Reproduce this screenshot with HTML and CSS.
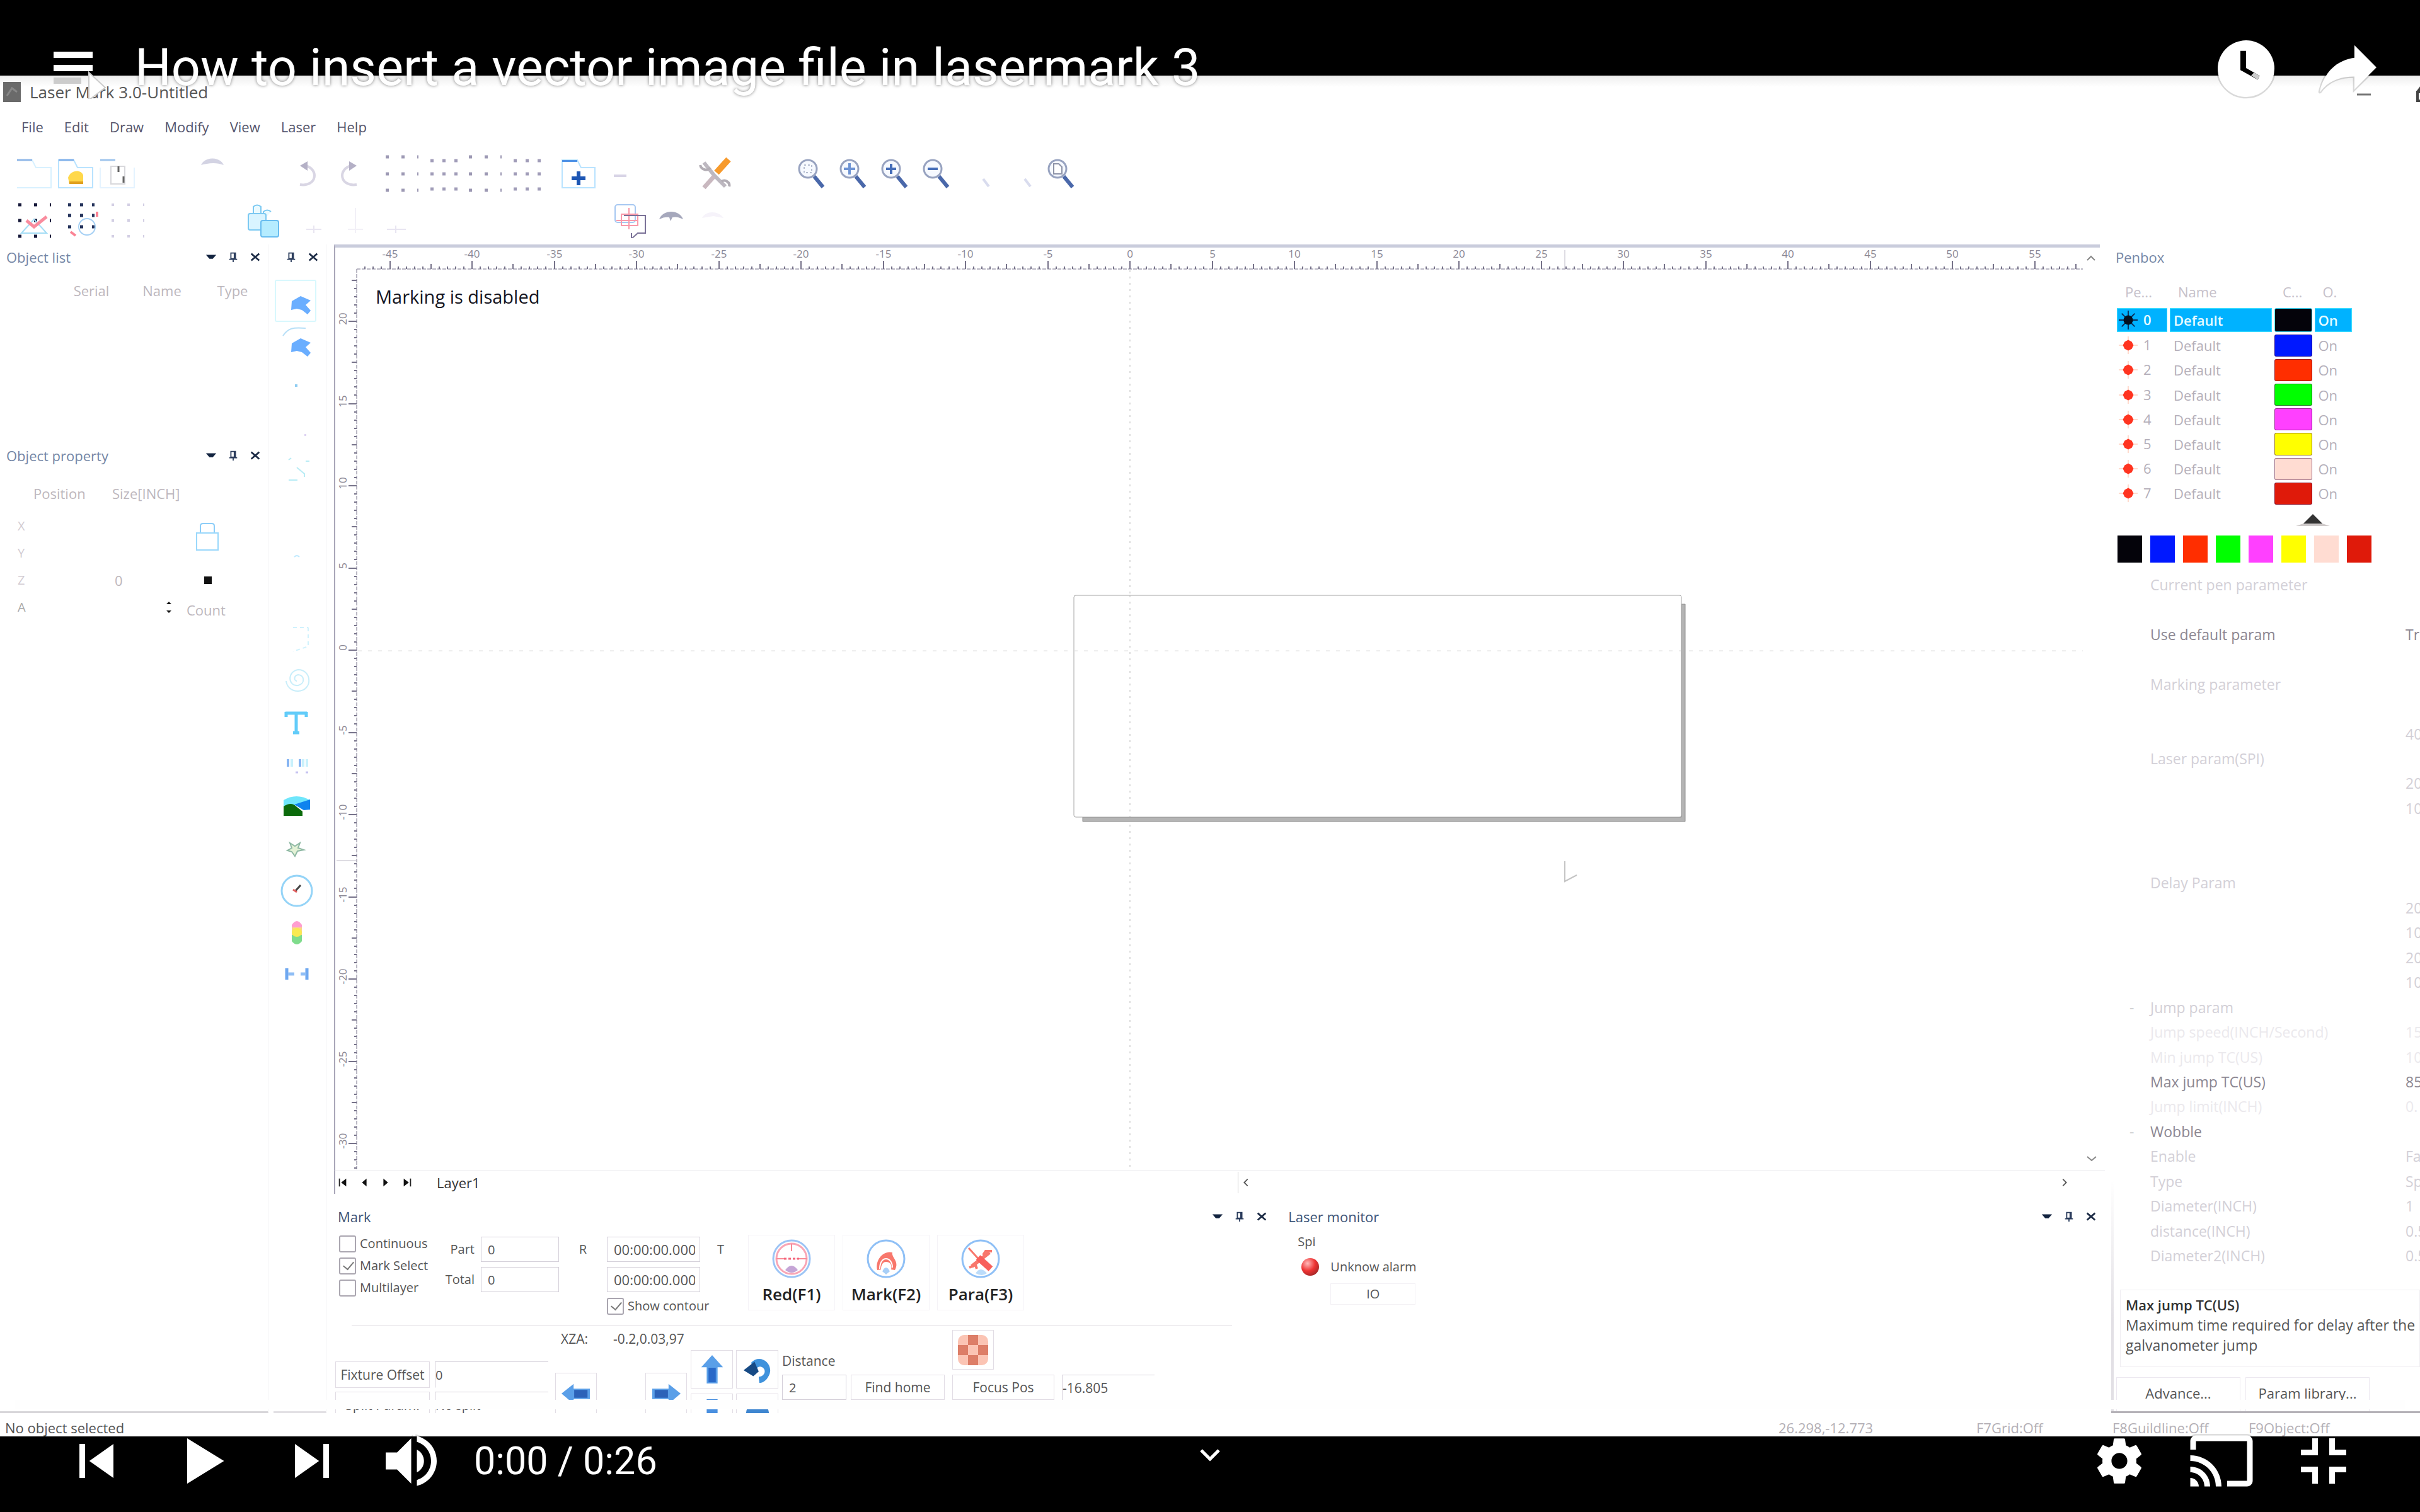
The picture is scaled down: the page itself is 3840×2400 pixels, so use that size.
FILE: index.html
```html
<!DOCTYPE html>
<html lang="en">
<head>
    <meta charset="UTF-8">
    <meta name="viewport" content="width=device-width, initial-scale=1.0">
    <title>How to insert a vector image file in lasermark 3</title>
    <link rel="stylesheet" href="styles.css">
</head>
<body>

    <!-- shared icons -->
    <svg class="sprite" aria-hidden="true">
        <symbol id="i-down" viewBox="0 0 20 20"><path d="M1 6h18l-6 7H7z" fill="#12233f"/></symbol>
        <symbol id="i-pin" viewBox="0 0 20 20"><path d="M6 3h8v10H6zM3 14h14M10 14v5M12 3v10" fill="none" stroke="#2b3c5c" stroke-width="2"/></symbol>
        <symbol id="i-close" viewBox="0 0 20 20"><path d="M3 4l14 12M17 4L3 16" fill="none" stroke="#1d2c46" stroke-width="3"/></symbol>
        <symbol id="i-zoom" viewBox="0 0 56 56"><circle cx="24" cy="20" r="14" fill="#f6f9ff" stroke="#98a3c0" stroke-width="3"/><path d="M34 32l14 17" stroke="#4a68aa" stroke-width="6"/></symbol>
        <symbol id="i-dots" viewBox="0 0 56 60"><path d="M3 3h52M3 30h52M3 56h52" stroke="#9d99b4" stroke-width="5" stroke-dasharray="5 20"/></symbol>
        <symbol id="i-dots-s" viewBox="0 0 56 60"><path d="M8 9h45M8 30h45M8 54h45" stroke="#a09cb8" stroke-width="5" stroke-dasharray="5 14"/></symbol>
        <symbol id="i-arrow" viewBox="0 0 60 60"><path d="M16 38l1-14 14-8 16 7-8 7 8 9-5 6-9-7-8-2z" fill="#6aaeff"/></symbol>
        <symbol id="i-burst" viewBox="0 0 32 32"><path d="M0 16h32M16 1v30" stroke="#ffb49a" stroke-width="1"/><path d="M16 7l6 3 3 6-3 6-6 3-6-3-3-6 3-6z" fill="#ff3420"/></symbol>
    </svg>

    <div class="player">
        <main class="app">
            <header class="titlebar">
                <svg class="app-icon" viewBox="0 0 28 32"><rect width="28" height="32" fill="#6a6a6a"/><path d="M6 22l8-12 8 6" fill="none" stroke="#888" stroke-width="3"/></svg>
                <span class="app-name">Laser Mark 3.0-Untitled</span>
                <svg class="window-buttons" viewBox="0 0 102 36"><path d="M2 22h22" stroke="#777" stroke-width="3"/><path d="M98 34V18l6-8M96 18h8M98 32h8" fill="none" stroke="#444" stroke-width="4"/></svg>
            </header>

            <nav class="menubar">
                <a href="#">File</a>
                <a href="#">Edit</a>
                <a href="#">Draw</a>
                <a href="#">Modify</a>
                <a href="#">View</a>
                <a href="#">Laser</a>
                <a href="#">Help</a>
            </nav>

            <div class="toolbar">
                <div class="tools">
                    <button aria-label="New"><svg viewBox="0 0 56 56"><path d="M1 6h24l6 12h24v32H1" fill="none" stroke="#d8f1ff" stroke-width="2"/><path d="M1 6h24" stroke="#8fb7e8" stroke-width="3"/></svg></button>
                    <button aria-label="Open"><svg viewBox="0 0 56 56"><path d="M1 6h24l6 12h24v32H1z" fill="none" stroke="#b9e3ff" stroke-width="2"/><path d="M1 6h24" stroke="#7fb0ea" stroke-width="3"/><path d="M16 34c4-12 20-14 24-4v14H18z" fill="#ffd84a"/><path d="M18 40h22v4H18z" fill="#e0a020"/></svg></button>
                    <button aria-label="Save"><svg viewBox="0 0 56 56"><path d="M1 50V18M55 18v32H1" fill="none" stroke="#e4f3ff" stroke-width="2"/><path d="M1 6h24" stroke="#9fc4ec" stroke-width="3"/><path d="M18 16h22v28H18z" fill="none" stroke="#d8d8dc" stroke-width="2"/><path d="M30 16v9M38 32v10" stroke="#666" stroke-width="3"/></svg></button>
                </div>
                <div class="tools wide">
                    <button aria-label="Cut"><svg viewBox="0 0 56 56"><path d="M10 14c6-14 30-14 36 0-12-5-26-3-36 0z" fill="#d3d3e3"/></svg></button>
                </div>
                <div class="tools wide">
                    <button aria-label="Undo"><svg viewBox="0 0 56 56"><path d="M16 45c28 4 30-26 8-30" fill="none" stroke="#d9d6e4" stroke-width="4"/><path d="M28 8L16 15l12 8z" fill="#b4b0c6"/></svg></button>
                    <button aria-label="Redo"><svg viewBox="0 0 56 56"><path d="M40 45c-28 4-30-26-8-30" fill="none" stroke="#d9d6e4" stroke-width="4"/><path d="M28 8l12 7-12 8z" fill="#b4b0c6"/></svg></button>
                </div>
                <div class="tools near">
                    <button aria-label="Align left"><svg><use href="#i-dots"/></svg></button>
                    <button aria-label="Align center"><svg><use href="#i-dots-s"/></svg></button>
                    <button aria-label="Align right"><svg><use href="#i-dots"/></svg></button>
                    <button aria-label="Distribute"><svg><use href="#i-dots-s"/></svg></button>
                </div>
                <div class="tools near">
                    <button aria-label="Add layer"><svg viewBox="0 0 56 56"><path d="M2 6h24l6 12h22v32H2z" fill="none" stroke="#b9e3ff" stroke-width="2"/><path d="M2 6h24v3H2z" fill="#4f92e6"/><path d="M28 24v22M17 35h22" stroke="#1d56b4" stroke-width="6"/></svg></button>
                    <button aria-label="Remove layer"><svg viewBox="0 0 56 56"><path d="M18 31h20" stroke="#d8d4e6" stroke-width="4"/></svg></button>
                </div>
                <div class="tools wide">
                    <button aria-label="Settings"><svg viewBox="0 0 56 56"><path d="M10 10l16 20 18 18" stroke="#bdb8c0" stroke-width="6" fill="none"/><path d="M26 32L10 50" stroke="#c9b8bf" stroke-width="7"/><path d="M30 26L49 5" stroke="#f79a2c" stroke-width="10"/><path d="M4 14c2 8 12 10 16 4M38 40c6-4 14 2 12 8" fill="none" stroke="#b2adb4" stroke-width="4"/></svg></button>
                </div>
                <div class="tools wide">
                    <button aria-label="Zoom window"><svg viewBox="0 0 56 56"><use href="#i-zoom"/><path d="M18 14h12v12H18z" fill="none" stroke="#b6bed2" stroke-dasharray="3 3" stroke-width="2"/></svg></button>
                    <button aria-label="Zoom all"><svg viewBox="0 0 56 56"><use href="#i-zoom"/><path d="M24 11v18M15 20h18" stroke="#6d93d4" stroke-width="4"/></svg></button>
                    <button aria-label="Zoom in"><svg viewBox="0 0 56 56"><use href="#i-zoom"/><path d="M24 12v16M16 20h16" stroke="#456db8" stroke-width="4"/></svg></button>
                    <button aria-label="Zoom out"><svg viewBox="0 0 56 56"><use href="#i-zoom"/><path d="M16 20h16" stroke="#456db8" stroke-width="4"/></svg></button>
                    <button aria-label="Zoom previous"><svg viewBox="0 0 56 56"><path d="M38 36l9 12" stroke="#d9dcee" stroke-width="4"/></svg></button>
                    <button aria-label="Zoom next"><svg viewBox="0 0 56 56"><path d="M38 36l9 12" stroke="#d9dcee" stroke-width="4"/></svg></button>
                    <button aria-label="Zoom page"><svg viewBox="0 0 56 56"><use href="#i-zoom"/><path d="M18 12h8l5 5v11H18z" fill="#fff" stroke="#8d93a8" stroke-width="2"/></svg></button>
                </div>
            </div>

            <div class="toolbar second">
                <div class="tools loose">
                    <button aria-label="Edit nodes"><svg viewBox="0 0 56 56"><path d="M3 3h52M3 28h52M3 53h52" stroke="#16193a" stroke-width="5" stroke-dasharray="5 20"/><path d="M8 48l20-22 20 22z" fill="none" stroke="#a5ddf5" stroke-width="2"/><path d="M16 28l12 10 20-16" fill="none" stroke="#f98c9e" stroke-width="5"/></svg></button>
                    <button aria-label="Pick nodes"><svg viewBox="0 0 56 56"><path d="M8 3h42M8 20h42M8 38h42" stroke="#26345c" stroke-width="5" stroke-dasharray="5 14"/><circle cx="38" cy="38" r="13" fill="none" stroke="#a5d0f4" stroke-width="2"/><path d="M12 46l8 6M54 14v8" stroke="#fb8394" stroke-width="4"/></svg></button>
                    <button aria-label="Snap"><svg viewBox="0 0 56 56"><path d="M3 3h52M3 28h52M3 53h52" stroke="#d3cfe4" stroke-width="4" stroke-dasharray="4 21"/></svg></button>
                </div>
                <div class="tools lock-gap">
                    <button aria-label="Lock"><svg viewBox="0 0 56 56"><path d="M12 18V6q6-5 12 0v12M28 28V14q6-5 12 0" fill="#eafaff" stroke="#7cc9f2" stroke-width="2"/><rect x="4" y="17" width="28" height="26" rx="3" fill="#d9f4ff" stroke="#7cc9f2" stroke-width="2"/><rect x="24" y="28" width="28" height="26" rx="3" fill="#b5ecff" stroke="#69bdf0" stroke-width="2"/></svg></button>
                    <button aria-label="Move up"><svg viewBox="0 0 56 56"><path d="M30 42h24M42 36v12" stroke="#e8e5f1" stroke-width="2"/></svg></button>
                    <button aria-label="Move down"><svg viewBox="0 0 56 56"><path d="M30 42h24M42 8v40" stroke="#f2f0f7" stroke-width="2"/></svg></button>
                    <button aria-label="Center"><svg viewBox="0 0 56 56"><path d="M26 42h30M40 36v12" stroke="#e8e5f1" stroke-width="2"/></svg></button>
                </div>
                <div class="tools far">
                    <button aria-label="Hatch"><svg viewBox="0 0 56 56"><rect x="4" y="3" width="32" height="28" rx="4" fill="none" stroke="#a6c8f2" stroke-width="2"/><path d="M6 28h34M26 8v34M14 18h26v18H14z" fill="none" stroke="#f99aaa" stroke-width="2"/><path d="M18 20h34v28H40l-10 9v-9" fill="none" stroke="#7b7298" stroke-width="2"/></svg></button>
                    <button aria-label="Group"><svg viewBox="0 0 56 56"><path d="M8 26c6-16 32-16 38 0-8-4-13-4-17-3l-3 6-2-6c-5-1-10 0-16 3z" fill="#a6a8bc"/></svg></button>
                    <button aria-label="Ungroup"><svg viewBox="0 0 56 56"><path d="M10 24c6-12 26-12 34 0l-16-3z" fill="#f6f3fa"/></svg></button>
                </div>
            </div>

            <div class="workspace">
                <aside class="left-dock">
                    <section class="object-list">
                        <div class="panel-head">
                            <h2>Object list</h2>
                            <button aria-label="Menu"><svg><use href="#i-down"/></svg></button>
                            <button aria-label="Pin"><svg><use href="#i-pin"/></svg></button>
                            <button aria-label="Close"><svg><use href="#i-close"/></svg></button>
                        </div>
                        <table class="objects">
                            <thead><tr><th>Serial</th><th>Name</th><th>Type</th></tr></thead>
                        </table>
                    </section>
                    <section class="object-property">
                        <div class="panel-head">
                            <h2>Object property</h2>
                            <button aria-label="Menu"><svg><use href="#i-down"/></svg></button>
                            <button aria-label="Pin"><svg><use href="#i-pin"/></svg></button>
                            <button aria-label="Close"><svg><use href="#i-close"/></svg></button>
                        </div>
                        <form class="property-form">
                            <span class="col-position">Position</span>
                            <span class="col-size">Size[INCH]</span>
                            <label class="axis" for="x">X</label><input id="x" type="text"><input type="text" aria-label="Width">
                            <label class="axis" for="y">Y</label><input id="y" type="text"><input type="text" aria-label="Height">
                            <label class="axis" for="z">Z</label><input id="z" type="text"><input type="text" aria-label="Depth" value="0">
                            <label class="axis strong" for="a">A</label><input id="a" type="text"><input type="text" aria-label="Angle">
                            <svg class="spin" viewBox="0 0 8 20"><path d="M0 5l4-4 4 4zM0 15h8l-4 4z" fill="#111"/></svg>
                            <button class="size-lock" type="button" aria-label="Keep ratio"><svg viewBox="0 0 36 46"><path d="M7 17V6q0-4 4-4h14q4 0 4 4v11" fill="none" stroke="#8ccdf8" stroke-width="2"/><rect x="1" y="17" width="34" height="27" fill="none" stroke="#9ad8fb" stroke-width="2"/></svg></button>
                            <input class="anchor" type="checkbox" checked aria-label="Anchor">
                            <button class="count" type="button">Count</button>
                        </form>
                    </section>
                </aside>

                <aside class="palette">
                    <div class="panel-head">
                        <button aria-label="Pin"><svg><use href="#i-pin"/></svg></button>
                        <button aria-label="Close"><svg><use href="#i-close"/></svg></button>
                    </div>
                    <button class="tool active" aria-label="Select"><svg viewBox="0 0 60 60"><use href="#i-arrow" x="5" y="6"/></svg></button>
                    <button class="tool" aria-label="Node edit"><svg viewBox="0 0 60 60"><path d="M8 18c8-12 16-14 36-12" fill="none" stroke="#b6dff7" stroke-width="2"/><use href="#i-arrow" x="5" y="6"/></svg></button>
                    <button class="tool" aria-label="Point"><svg viewBox="0 0 60 60"><rect x="27" y="28" width="4" height="4" fill="#8fcdf2"/></svg></button>
                    <button class="tool" aria-label="Line"><svg viewBox="0 0 60 60"><rect x="42" y="40" width="3" height="3" fill="#ddd2f2"/></svg></button>
                    <button class="tool" aria-label="Polyline"><svg viewBox="0 0 60 60"><path d="M17 14l4-3M44 16h6M30 26l12 10v5M17 46h14" fill="none" stroke="#b8ecf5" stroke-width="2"/></svg></button>
                    <button class="tool" aria-label="Curve"></button>
                    <button class="tool" aria-label="Rectangle"><svg viewBox="0 0 60 60"><path d="M26 34q4-4 8 0" fill="none" stroke="#c0eaff" stroke-width="2"/></svg></button>
                    <button class="tool" aria-label="Circle"></button>
                    <button class="tool" aria-label="Polygon"><svg viewBox="0 0 60 60"><path d="M24 12h24M48 12v30l-24 8" fill="none" stroke="#d0f2fd" stroke-width="2" stroke-dasharray="6 5"/></svg></button>
                    <button class="tool" aria-label="Spiral"><svg viewBox="0 0 60 60"><path d="M30 30c-4 0-6-8 2-10 10 0 12 14 0 17-16 2-18-22 0-25 22 0 24 33 0 34-12 0-18-8-19-16" fill="none" stroke="#c9eefa" stroke-width="2"/></svg></button>
                    <button class="tool" aria-label="Text"><svg viewBox="0 0 60 60"><path d="M12 14h34M29 14v32M24 45h10M13 12v8M45 12v8" fill="none" stroke="#62ccf9" stroke-width="5"/></svg></button>
                    <button class="tool" aria-label="Barcode"><svg viewBox="0 0 60 60"><path d="M16 20v12M35 20v12" stroke="#86b4f2" stroke-width="4"/><path d="M22 20v12M40 20v12M46 20v12" stroke="#c9f1fc" stroke-width="4"/><path d="M28 41h4M44 41h4" stroke="#c7c4f2" stroke-width="3"/></svg></button>
                    <button class="tool" aria-label="Image"><svg viewBox="0 0 60 60"><path d="M9 18q20-12 42 0v6L9 28z" fill="#6fe6fb"/><path d="M26 25l25-8v16l-10 1z" fill="#0f83ee"/><path d="M9 28q12-8 20 0l10 8v7H9z" fill="#0b6a0b"/></svg></button>
                    <button class="tool" aria-label="Vector file"><svg viewBox="0 0 60 60"><path d="M19 19l8 5 8-5-3 8 9 3-10 2-4 8-5-7-7-2 7-4z" fill="#e4f2d6" stroke="#8fb9a4" stroke-width="2"/></svg></button>
                    <button class="tool" aria-label="Timer"><svg viewBox="0 0 60 60"><circle cx="30" cy="28" r="24" fill="#fff" stroke="#95d4f7" stroke-width="3"/><path d="M27 29l9-10" stroke="#444" stroke-width="3"/><path d="M24 26l6 4" stroke="#e06060" stroke-width="3"/></svg></button>
                    <button class="tool" aria-label="Layers"><svg viewBox="0 0 60 60"><path d="M22 21v-6q8-12 16 0v6z" fill="#ff9ed0"/><path d="M22 19h16v16H22z" fill="#fbd58c"/><path d="M22 31v10q8 10 16 0V31z" fill="#7fdc8c"/><ellipse cx="30" cy="27" rx="8" ry="7" fill="#f9ea50"/></svg></button>
                    <button class="tool" aria-label="Dimension"><svg viewBox="0 0 60 60"><path d="M14 17v18M46 17v18" stroke="#6fa8f0" stroke-width="5"/><path d="M16 26h10M36 26h9" stroke="#8fbef5" stroke-width="5"/></svg></button>
                </aside>

                <div class="center">
                    <div class="canvas">
                        <svg id="drawing" class="drawing">
                            <g id="rulers"></g>
                            <path d="M34 34H2773M34 34V1463" class="ruler-line"/>
                            <path d="M1951 4V34M2 973H34" class="tracker"/>
                            <path d="M1261 36V1463" class="axis-v"/>
                            <path d="M36 640H2773" class="axis-h"/>
                            <path d="M1186 904H2136V566H2142V911H1186z" class="work-shadow"/>
                            <rect x="1172" y="552" width="964" height="352" rx="3" class="work-area"/>
                            <path d="M1261 552V904" class="axis-v"/>
                            <path d="M1172 640H2136" class="axis-h"/>
                            <path d="M1951 974V1006L1970 996" class="pointer"/>
                            <text x="64" y="89" class="notice">Marking is disabled</text>
                            <path d="M2780 20l6-6 6 6M2780 1443l7 6 7-6" class="scroll-mark"/>
                        </svg>
                    </div>
                    <div class="sheets">
                        <button aria-label="First"><svg viewBox="0 0 20 20"><path d="M4 3v14" stroke="#222" stroke-width="2"/><path d="M16 3v14l-9-7z" fill="#111"/></svg></button>
                        <button aria-label="Previous"><svg viewBox="0 0 20 20"><path d="M14 3v14l-8-7z" fill="#111"/></svg></button>
                        <button aria-label="Next"><svg viewBox="0 0 20 20"><path d="M6 3v14l8-7z" fill="#111"/></svg></button>
                        <button aria-label="Last"><svg viewBox="0 0 20 20"><path d="M16 3v14" stroke="#222" stroke-width="2"/><path d="M4 3v14l9-7z" fill="#111"/></svg></button>
                        <button class="sheet">Layer1</button>
                        <div class="hscroll">
                            <svg viewBox="0 0 20 20"><path d="M13 4l-6 6 6 6" fill="none" stroke="#555" stroke-width="2"/></svg>
                            <svg viewBox="0 0 20 20"><path d="M7 4l6 6-6 6" fill="none" stroke="#555" stroke-width="2"/></svg>
                        </div>
                    </div>

                    <div class="bottom-dock">
                        <section class="mark">
                            <div class="panel-head dark">
                                <h2>Mark</h2>
                                <button aria-label="Menu"><svg><use href="#i-down"/></svg></button>
                                <button aria-label="Pin"><svg><use href="#i-pin"/></svg></button>
                                <button aria-label="Close"><svg><use href="#i-close"/></svg></button>
                            </div>
                            <div class="mark-top">
                                <div class="options">
                                    <label><input type="checkbox">Continuous</label>
                                    <label><input type="checkbox" checked>Mark Select</label>
                                    <label><input type="checkbox">Multilayer</label>
                                </div>
                                <div class="counters">
                                    <label for="part">Part</label>
                                    <input id="part" type="text" value="0">
                                    <label class="mid" for="rtime">R</label>
                                    <input id="rtime" type="text" value="00:00:00.000">
                                    <span class="mid">T</span>
                                    <label for="total">Total</label>
                                    <input id="total" type="text" value="0">
                                    <span></span>
                                    <input type="text" value="00:00:00.000" aria-label="Total time">
                                    <label class="contour"><input type="checkbox" checked>Show contour</label>
                                </div>
                                <div class="actions">
                                    <button><svg viewBox="0 0 64 64"><circle cx="32" cy="32" r="29" fill="#fff" stroke="#9cc4f5" stroke-width="3"/><circle cx="32" cy="32" r="24" fill="none" stroke="#f9a5b5" stroke-width="3"/><path d="M8 32h16M40 32h16M32 8v12" stroke="#f88a96" stroke-width="2"/><path d="M20 32h24" stroke="#f4647a" stroke-width="3" stroke-dasharray="4 3"/><path d="M22 50q10-14 20 0-10 8-20 0z" fill="#c5a5d6"/></svg>Red(F1)</button>
                                    <button><svg viewBox="0 0 64 64"><circle cx="32" cy="32" r="29" fill="#fff" stroke="#8fc0f6" stroke-width="3"/><path d="M18 50c-4-16 10-32 24-28-2 8 12 14 4 28l-6-1c2-8-2-12-8-12s-8 6-8 12z" fill="#f8776c"/><path d="M22 48c0-22 20-20 20-2" fill="none" stroke="#fff" stroke-width="2"/><path d="M26 52q6-12 12 0l-6 5z" fill="#a8cff7"/></svg>Mark(F2)</button>
                                    <button><svg viewBox="0 0 64 64"><circle cx="32" cy="32" r="29" fill="#fff" stroke="#8fc0f6" stroke-width="3"/><path d="M13 15l19 21" stroke="#f8776c" stroke-width="3"/><path d="M46 22L18 44" stroke="#f8776c" stroke-width="6"/><path d="M28 30l20 18" stroke="#f8605c" stroke-width="10"/><path d="M36 26l4-6h10M14 46l10-4 2 6" fill="none" stroke="#f8776c" stroke-width="4"/><path d="M24 55q8-12 18 0-8 6-18 0z" fill="#bcdcfa"/></svg>Para(F3)</button>
                                </div>
                            </div>
                            <div class="mark-bottom">
                                <div class="fixture">
                                    <button>Fixture Offset</button>
                                    <input type="text" value="0" aria-label="Fixture offset">
                                    <button>Split Param.</button>
                                    <input type="text" value="No split" aria-label="Split">
                                </div>
                                <div class="pad">
                                    <p><span>XZA:</span><span>-0.2,0.03,97</span></p>
                                    <button aria-label="X-"><svg viewBox="0 0 50 50"><path d="M1 25l20-16v8h27v17H21v8z" fill="#5a9fe8"/><path d="M22 19h22v13H22z" fill="#2c62b8"/></svg></button>
                                    <button aria-label="X+"><svg viewBox="0 0 50 50"><path d="M49 25L29 9v8H2v17h27v8z" fill="#5a9fe8"/><path d="M6 19h22v13H6z" fill="#2c62b8"/></svg></button>
                                </div>
                                <div class="jog">
                                    <button aria-label="Z+"><svg viewBox="0 0 50 50"><path d="M25 1l18 20h-9v27H16V21H7z" fill="#5a9fe8"/><path d="M19 22h12v24H19z" fill="#2868c8"/></svg></button>
                                    <button aria-label="A+"><svg viewBox="0 0 50 50"><path d="M14 14C30-4 56 18 42 38c-3 5-8 9-14 9l-1-10c10-1 12-10 8-14-4-5-10-3-12 1z" fill="#3f92dc"/><path d="M2 26l18-14 7 16-9 8z" fill="#174a85"/></svg></button>
                                    <button aria-label="Z-"><svg viewBox="0 0 50 50"><path d="M16 2h18v24h10L25 48 6 26h10z" fill="#4a90e0"/></svg></button>
                                    <button aria-label="A-"><svg viewBox="0 0 50 50"><path d="M6 34C2-4 48-4 44 34H32q-6-16-14 0z" fill="#3f86d0"/></svg></button>
                                </div>
                                <div class="distance">
                                    <label for="distance">Distance</label>
                                    <input id="distance" type="text" value="2">
                                </div>
                                <button class="home">Find home</button>
                                <div class="focus">
                                    <button class="grid-button" aria-label="Grid"><svg viewBox="0 0 48 48"><rect width="48" height="48" rx="10" fill="#fbc4b4"/><path d="M16 0h16v16H16zM0 16h16v16H0zM32 16h16v16H32zM16 32h16v16H16z" fill="#dd7e68"/></svg></button>
                                    <button>Focus Pos</button>
                                </div>
                                <input class="focus-value" type="text" value="-16.805" aria-label="Focus position">
                            </div>
                        </section>

                        <section class="monitor">
                            <div class="panel-head dark">
                                <h2>Laser monitor</h2>
                                <button aria-label="Menu"><svg><use href="#i-down"/></svg></button>
                                <button aria-label="Pin"><svg><use href="#i-pin"/></svg></button>
                                <button aria-label="Close"><svg><use href="#i-close"/></svg></button>
                            </div>
                            <p class="spi">Spi</p>
                            <p class="alarm"><span class="lamp"></span>Unknow alarm</p>
                            <button class="io">IO</button>
                        </section>
                    </div>
                </div>

                <aside class="right-dock">
                    <div class="panel-head"><h2>Penbox</h2></div>
                    <table class="pens">
                        <thead><tr><th>Pe...</th><th>Name</th><th>C...</th><th>O.</th></tr></thead>
                        <tbody>
                            <tr class="selected"><td><svg viewBox="0 0 32 32"><path d="M0 16h32M16 0v32M5 5l22 22M27 5L5 27" stroke="#0a2a55" stroke-width="2"/><circle cx="16" cy="16" r="8" fill="#03101f"/></svg>0</td><td>Default</td><td class="black"></td><td>On</td></tr>
                            <tr><td><svg><use href="#i-burst"/></svg>1</td><td>Default</td><td class="blue"></td><td>On</td></tr>
                            <tr><td><svg><use href="#i-burst"/></svg>2</td><td>Default</td><td class="red"></td><td>On</td></tr>
                            <tr><td><svg><use href="#i-burst"/></svg>3</td><td>Default</td><td class="green"></td><td>On</td></tr>
                            <tr><td><svg><use href="#i-burst"/></svg>4</td><td>Default</td><td class="magenta"></td><td>On</td></tr>
                            <tr><td><svg><use href="#i-burst"/></svg>5</td><td>Default</td><td class="yellow"></td><td>On</td></tr>
                            <tr><td><svg><use href="#i-burst"/></svg>6</td><td>Default</td><td class="pink"></td><td>On</td></tr>
                            <tr><td><svg><use href="#i-burst"/></svg>7</td><td>Default</td><td class="darkred"></td><td>On</td></tr>
                        </tbody>
                    </table>
                    <svg class="expander" viewBox="0 0 54 20"><path d="M0 19l12-4h30l12 4z" fill="#cfcaca"/><path d="M27 0l15 15H12z" fill="#333"/></svg>
                    <div class="swatches">
                        <button class="black" aria-label="Pen 0"></button>
                        <button class="blue" aria-label="Pen 1"></button>
                        <button class="red" aria-label="Pen 2"></button>
                        <button class="green" aria-label="Pen 3"></button>
                        <button class="magenta" aria-label="Pen 4"></button>
                        <button class="yellow" aria-label="Pen 5"></button>
                        <button class="pink" aria-label="Pen 6"></button>
                        <button class="darkred" aria-label="Pen 7"></button>
                    </div>
                    <dl class="params">
                        <div class="pale"><dt>Current pen parameter</dt></div>
                        <div></div>
                        <div class="clear"><dt>Use default param</dt><dd>True</dd></div>
                        <div></div>
                        <div class="pale"><dt>Marking parameter</dt></div>
                        <div></div>
                        <div class="pale"><dt></dt><dd>40</dd></div>
                        <div class="pale"><dt>Laser param(SPI)</dt></div>
                        <div class="pale"><dt></dt><dd>20</dd></div>
                        <div class="pale"><dt></dt><dd>10</dd></div>
                        <div></div>
                        <div></div>
                        <div class="pale"><dt>Delay Param</dt></div>
                        <div class="pale"><dt></dt><dd>20</dd></div>
                        <div class="pale"><dt></dt><dd>10</dd></div>
                        <div class="pale"><dt></dt><dd>20</dd></div>
                        <div class="pale"><dt></dt><dd>10</dd></div>
                        <div class="pale group"><dt>Jump param</dt></div>
                        <div class="faint"><dt>Jump speed(INCH/Second)</dt><dd>150</dd></div>
                        <div class="faint"><dt>Min jump TC(US)</dt><dd>10</dd></div>
                        <div class="clear"><dt>Max jump TC(US)</dt><dd>85</dd></div>
                        <div class="faint"><dt>Jump limit(INCH)</dt><dd>0.</dd></div>
                        <div class="clear group"><dt>Wobble</dt></div>
                        <div class="pale"><dt>Enable</dt><dd>False</dd></div>
                        <div class="pale"><dt>Type</dt><dd>Spiral</dd></div>
                        <div class="pale"><dt>Diameter(INCH)</dt><dd>1</dd></div>
                        <div class="pale"><dt>distance(INCH)</dt><dd>0.5</dd></div>
                        <div class="pale"><dt>Diameter2(INCH)</dt><dd>0.5</dd></div>
                    </dl>
                    <div class="hint">
                        <h3>Max jump TC(US)</h3>
                        <p>Maximum time required for delay after the<br>galvanometer jump</p>
                    </div>
                    <div class="pen-buttons">
                        <button>Advance...</button>
                        <button>Param library...</button>
                    </div>
                </aside>
            </div>

            <footer class="statusbar">
                <span>No object selected</span>
                <span>26.298,-12.773</span>
                <span>F7Grid:Off</span>
                <span>F8Guildline:Off</span>
                <span>F9Object:Off</span>
            </footer>
        </main>

        <header class="player-top">
            <button class="playlist" aria-label="Playlist"><svg viewBox="0 0 88 80"><path d="M5 5h62v10H5zM5 26h62v10H5z" fill="#fff"/><path d="M5 46h44v10H5z" fill="#ccc"/><path d="M61 38v44l26-20z" fill="#fff" stroke="#ccc" stroke-width="2"/></svg></button>
            <h1><a href="#">How to insert a vector image file in lasermark 3</a></h1>
            <button aria-label="Watch later"><svg viewBox="0 0 36 36"><circle cx="18" cy="18" r="10" class="glyph"/><path d="M16 11.7h2v6.1l4.8 2.7-.7 1.4-6.1-3.4z" fill="#000"/><path d="M19.8 20.4l1-1 2 1.1-.7 1.4z" fill="#ccc"/></svg></button>
            <button aria-label="Share"><svg viewBox="0 0 36 36"><path class="glyph" d="m 20.20,14.19 0,-4.45 7.79,7.79 -7.79,7.79 0,-4.56 C 16.27,20.69 12.10,21.81 9.34,24.76 8.80,25.13 7.60,27.29 8.12,25.65 9.08,21.32 11.80,17.18 15.98,15.38 c 1.33,-0.60 2.76,-0.98 4.21,-1.19 z"/></svg></button>
        </header>

        <input class="progress" type="range" min="0" max="26" value="0" aria-label="Seek">

        <div class="player-controls">
            <button aria-label="Previous"><svg viewBox="0 0 36 36"><path class="glyph" d="m 12,12 h 2 v 12 h -2 z m 3.5,6 8.5,6 V 12 z"/></svg></button>
            <button class="play" aria-label="Play"><svg viewBox="0 0 36 36"><path class="glyph" d="M12,26 25,18 12,10z"/></svg></button>
            <button aria-label="Next"><svg viewBox="0 0 36 36"><path class="glyph" d="M 12,24 20.5,18 12,12 V 24 z M 22,12 v 12 h 2 V 12 h -2 z"/></svg></button>
            <button aria-label="Mute"><svg viewBox="0 0 36 36"><path class="glyph" d="M8,21 L12,21 L17,26 L17,10 L12,15 L8,15 L8,21 Z M19,14 L19,22 C20.48,21.32 21.5,19.77 21.5,18 C21.5,16.26 20.48,14.74 19,14 Z M19,11.29 C21.89,12.15 24,14.83 24,18 C24,21.17 21.89,23.85 19,24.71 L19,26.77 C23.01,25.86 26,22.28 26,18 C26,13.72 23.01,10.14 19,9.23 Z"/></svg></button>
            <span class="time">0:00 / 0:26</span>
            <button aria-label="Settings"><svg viewBox="0 0 36 36"><path class="glyph" fill-rule="evenodd" d="m 23.94,18.78 c .03,-0.25 .05,-0.51 .05,-0.78 0,-0.27 -0.02,-0.52 -0.05,-0.78 l 1.68,-1.32 c .15,-0.12 .19,-0.33 .09,-0.51 l -1.6,-2.76 c -0.09,-0.17 -0.31,-0.24 -0.48,-0.17 l -1.99,.8 c -0.41,-0.32 -0.86,-0.58 -1.35,-0.78 l -0.30,-2.12 c -0.02,-0.19 -0.19,-0.33 -0.39,-0.33 l -3.2,0 c -0.2,0 -0.36,.14 -0.39,.33 l -0.30,2.12 c -0.48,.2 -0.93,.47 -1.35,.78 l -1.99,-0.8 c -0.18,-0.07 -0.39,0 -0.48,.17 l -1.6,2.76 c -0.10,.17 -0.05,.39 .09,.51 l 1.68,1.32 c -0.03,.25 -0.05,.52 -0.05,.78 0,.26 .02,.52 .05,.78 l -1.68,1.32 c -0.15,.12 -0.19,.33 -0.09,.51 l 1.6,2.76 c .09,.17 .31,.24 .48,.17 l 1.99,-0.8 c .41,.32 .86,.58 1.35,.78 l .30,2.12 c .02,.19 .19,.33 .39,.33 l 3.2,0 c .2,0 .36,-0.14 .39,-0.33 l .30,-2.12 c .48,-0.2 .93,-0.47 1.35,-0.78 l 1.99,.8 c .18,.07 .39,0 .48,-0.17 l 1.6,-2.76 c .09,-0.17 .05,-0.39 -0.09,-0.51 l -1.68,-1.32 0,0 z m -5.94,2.01 c -1.54,0 -2.8,-1.25 -2.8,-2.8 0,-1.54 1.25,-2.8 2.8,-2.8 1.54,0 2.8,1.25 2.8,2.8 0,1.54 -1.25,2.8 -2.8,2.8 l 0,0 z"/></svg></button>
            <button aria-label="Cast"><svg viewBox="0 0 36 36"><path class="glyph" d="M27,9 L9,9 C7.9,9 7,9.9 7,11 L7,14 L9,14 L9,11 L27,11 L27,25 L20,25 L20,27 L27,27 C28.1,27 29,26.1 29,25 L29,11 C29,9.9 28.1,9 27,9 Z M7,24 L7,27 L10,27 C10,25.34 8.66,24 7,24 Z M7,20 L7,22 C9.76,22 12,24.24 12,27 L14,27 C14,23.13 10.87,20 7,20 Z M7,16 L7,18 C11.97,18 16,22.03 16,27 L18,27 C18,20.92 13.07,16 7,16 Z"/></svg></button>
            <button aria-label="Exit full screen"><svg viewBox="0 0 36 36"><path class="glyph" d="m 14,14 -4,0 0,2 6,0 0,-6 -2,0 z M 22,14 l 0,-4 -2,0 0,6 6,0 0,-2 z M 20,26 l 2,0 0,-4 4,0 0,-2 -6,0 z M 10,22 l 4,0 0,4 2,0 0,-6 -6,0 z"/></svg></button>
        </div>

        <button class="more" aria-label="More videos"><svg viewBox="0 0 36 24"><path d="M4 4l14 14L32 4" fill="none" stroke="#fff" stroke-width="5"/></svg></button>
    </div>

    <script src="rulers.js"></script>
</body>
</html>
```
FILE: rulers.js
```js
// Draws the two rulers of the drawing area: a tick each half unit,
// a label each five units.
const STEP = 130.5;
const ORIGIN_X = 1261;
const ORIGIN_Y = 639;
const EDGE = 34;

const rulers = document.getElementById("rulers");

function add(tag, attrs, text) {
    const node = document.createElementNS("http://www.w3.org/2000/svg", tag);
    for (const key in attrs) {
        node.setAttribute(key, attrs[key]);
    }
    if (text !== undefined) {
        node.textContent = text;
    }
    rulers.appendChild(node);
}

function tickLength(i) {
    if (i % 10 === 0) return 13;
    return i % 5 === 0 ? 8 : 4;
}

let d = "";
for (let i = -93; i <= 115; i++) {
    const x = Math.round(ORIGIN_X + i * STEP / 10);
    d += "M" + x + " " + EDGE + "v-" + tickLength(i);
    if (i % 10 === 0) {
        add("text", { x: x, y: 16, class: "ruler-label" }, i / 2);
    }
}

for (let i = -45; i <= 63; i++) {
    const y = Math.round(ORIGIN_Y + i * STEP / 10);
    d += "M" + EDGE + " " + y + "h-" + tickLength(i);
    if (i % 10 === 0) {
        add("text", { class: "ruler-label", transform: "translate(18 " + (y - 4) + ") rotate(-90)" }, i === 0 ? 0 : -i / 2);
    }
}

add("path", { d: d, class: "ruler-tick" });
```
FILE: styles.css
```css
* {
    box-sizing: border-box;
}

body {
    margin: 0;
    background: #000;
    color: #555;
    font-family: "Open Sans", "Noto Sans", sans-serif;
    font-size: 20px;
    line-height: 28px;
}

h1, h2, h3, p, dl, dd {
    margin: 0;
    font-weight: normal;
}

button, input {
    font: inherit;
    color: inherit;
    background: none;
    border: none;
    padding: 0;
    margin: 0;
    min-width: 0;
}

button {
    cursor: pointer;
}

a {
    color: inherit;
    text-decoration: none;
}

svg {
    display: block;
}

.sprite {
    position: absolute;
    width: 0;
    height: 0;
}

/* player */
.player {
    position: relative;
    height: 100vh;
    padding: 120px 0;
    overflow: hidden;
}

.player-top {
    position: absolute;
    top: 0;
    left: 0;
    right: 0;
    display: flex;
    padding: 28px 33px 0 80px;
    color: #fff;
}

.player-top h1 {
    flex: 1;
    padding-left: 46px;
    font-family: Roboto, sans-serif;
    font-size: 81px;
    line-height: 160px;
    text-shadow: 0 0 5px rgba(0, 0, 0, 0.5);
    white-space: nowrap;
}

.player-top svg,
.player-controls svg {
    width: 162px;
    height: 162px;
}

.player-top .playlist svg {
    width: 88px;
    height: 80px;
    margin-top: 16px;
}

.glyph {
    fill: #fff;
    stroke: rgba(0, 0, 0, 0.15);
    stroke-width: 1px;
    paint-order: stroke;
}

.progress {
    position: absolute;
    left: 24px;
    right: 24px;
    bottom: 163px;
    height: 15px;
    width: calc(100% - 48px);
    appearance: none;
    background: #fefefe;
}

.progress::-webkit-slider-thumb {
    appearance: none;
    width: 1px;
}

.player-controls {
    position: absolute;
    left: 0;
    right: 0;
    bottom: 0;
    display: flex;
    align-items: center;
    padding: 0 72px;
    color: #fff;
}

.player-controls .play {
    margin: 0 9px;
}

.time {
    flex: 1;
    padding-left: 14px;
    font-family: Roboto, sans-serif;
    font-size: 61px;
}

.more {
    position: absolute;
    left: 50%;
    bottom: 78px;
    margin-left: -18px;
}

.more svg {
    width: 36px;
    height: 24px;
}

/* laser mark window */
.app {
    display: flex;
    flex-direction: column;
    height: 100%;
    background: linear-gradient(#eee, #fff 18px);
    overflow: hidden;
}

.titlebar {
    display: flex;
    align-items: center;
    height: 52px;
    padding-left: 3px;
    font-size: 26px;
}

.app-icon {
    width: 32px;
    height: 32px;
}

.app-name {
    flex: 1;
    padding-left: 12px;
}

.window-buttons {
    width: 102px;
    height: 36px;
}

.menubar {
    display: flex;
    align-items: center;
    gap: 33px;
    height: 58px;
    padding-left: 34px;
    font-size: 22px;
    color: #55556c;
}

.toolbar {
    display: flex;
    align-items: center;
    height: 92px;
    padding-left: 26px;
}

.toolbar.second {
    height: 66px;
    padding-bottom: 10px;
}

.tools {
    display: flex;
    gap: 10px;
}

.tools svg {
    width: 56px;
    height: 60px;
}

.second .tools svg {
    height: 56px;
}

.tools.wide {
    margin-left: 95px;
}

.tools.near {
    margin-left: 27px;
}

.tools.loose {
    gap: 18px;
}

.tools.lock-gap {
    margin-left: 160px;
}

.tools.far {
    margin-left: 328px;
}

.workspace {
    flex: 1;
    display: grid;
    grid-template-columns: 426px 104px 1fr 500px;
    min-height: 0;
}

.panel-head {
    display: flex;
    align-items: center;
    height: 40px;
    padding-left: 10px;
    color: #7486a5;
}

.panel-head h2 {
    flex: 1;
    font-size: 22px;
}

.panel-head button {
    display: flex;
    justify-content: center;
    width: 35px;
}

.panel-head svg {
    width: 18px;
    height: 18px;
}

.panel-head.dark {
    height: 52px;
    padding: 0 11px 0 6px;
    color: #3d5578;
}

/* left side */
.left-dock {
    display: flex;
    flex-direction: column;
    border-bottom: 3px solid #d8d6da;
    border-right: 1px solid #f2f2f4;
}

.left-dock .panel-head {
    padding-right: 3px;
}

.object-list {
    height: 315px;
}

.objects {
    width: 336px;
    margin: 15px 0 0 89px;
    font-size: 22px;
    color: #bdb7bd;
    border-spacing: 0;
    table-layout: fixed;
}

.objects th {
    font-weight: normal;
    padding: 4px 0;
}

.property-form {
    display: grid;
    grid-template-columns: 25px 125px 80px 20px 1fr;
    grid-template-rows: 60px repeat(4, 43px);
    align-items: center;
    padding: 10px 40px 0 28px;
    font-size: 22px;
    color: #bdb7bd;
}

.property-form .col-position {
    grid-column: 2;
}

.property-form .col-size {
    grid-column: 3 / 6;
}

.property-form .axis {
    grid-column: 1;
    font-size: 20px;
    color: #d2ccd2;
}

.property-form .strong {
    color: #aaa;
}

.property-form input[type="text"] {
    width: 100%;
    padding-left: 4px;
}

.spin {
    grid-column: 4;
    grid-row: 5;
    width: 8px;
    height: 20px;
    margin-left: 6px;
}

.size-lock {
    grid-column: 5;
    grid-row: 2 / 4;
    justify-self: start;
    margin: 0 0 8px 33px;
}

.size-lock svg {
    width: 36px;
    height: 46px;
}

.anchor {
    grid-column: 5;
    grid-row: 4;
    appearance: none;
    width: 12px;
    height: 12px;
    margin-left: 46px;
    background: #111;
}

.count {
    grid-column: 5;
    grid-row: 5;
    justify-self: start;
    margin-left: 18px;
    padding-top: 8px;
}

.palette {
    display: flex;
    flex-direction: column;
    margin: 0 12px 0 8px;
    border-right: 1px solid #f2f2f4;
    border-bottom: 3px solid #e2e0e4;
}

.palette .panel-head {
    justify-content: center;
    margin-bottom: 16px;
    padding: 0 0 0 8px;
}

.tool {
    height: 67px;
    width: 66px;
    margin-left: 2px;
}

.tool svg {
    width: 60px;
    height: 60px;
    margin-left: 5px;
}

.palette .active {
    border: 2px solid #d8f8fd;
    border-radius: 3px;
}

.active svg {
    margin-left: 3px;
}

/* drawing area */
.center {
    display: flex;
    flex-direction: column;
    min-width: 0;
}

.canvas {
    flex: 1;
    min-height: 0;
    margin-right: 8px;
    border-top: 5px solid #c9ccdc;
    border-left: 2px solid #a9a6b8;
}

.drawing {
    width: 100%;
    height: 100%;
}

.ruler-line {
    fill: none;
    stroke: #77738a;
    stroke-width: 1;
    stroke-dasharray: 6 2;
}

.ruler-tick {
    fill: none;
    stroke: #77738a;
    stroke-width: 2;
}

.ruler-label {
    font-size: 17px;
    fill: #8a8794;
    text-anchor: middle;
}

.tracker {
    fill: none;
    stroke: #bcb9c6;
    stroke-width: 1;
}

.axis-v {
    fill: none;
    stroke: #b9b9b9;
    stroke-dasharray: 3 7;
}

.axis-h {
    fill: none;
    stroke: #dcdcdc;
    stroke-dasharray: 6 10;
}

.work-area {
    fill: #fff;
    stroke: #a5a5a5;
    stroke-width: 1;
}

.work-shadow {
    fill: #b4b4b4;
    stroke: #8d8d8d;
    stroke-width: 1;
}

.pointer {
    fill: none;
    stroke: #c4c4c4;
    stroke-width: 2;
}

.notice {
    font-size: 29px;
    fill: #15151f;
}

.scroll-mark {
    fill: none;
    stroke: #888;
    stroke-width: 2;
}

.sheets {
    display: flex;
    align-items: center;
    height: 37px;
    border-top: 1px solid #e6e6ea;
    border-left: 2px solid #a9a6b8;
    color: #333;
}

.sheets button {
    width: 34px;
}

.sheets svg {
    width: 20px;
    height: 18px;
    margin-left: 2px;
}

.sheets .sheet {
    flex: 1;
    padding-left: 25px;
    font-size: 22px;
    text-align: left;
}

.hscroll {
    display: flex;
    justify-content: space-between;
    width: 49%;
    height: 34px;
    align-items: center;
    padding: 0 54px 0 0;
    border-left: 1px solid #ccc;
}

/* mark panel */
.bottom-dock {
    display: grid;
    grid-template-columns: 1495fr 1305fr;
    height: 348px;
    padding-top: 10px;
    overflow: hidden;
}

.mark {
    display: flex;
    flex-direction: column;
    min-height: 0;
    overflow: hidden;
}

.mark-top {
    display: flex;
    height: 147px;
    padding: 3px 0 0 8px;
}

.options {
    display: flex;
    flex-direction: column;
    gap: 7px;
    width: 162px;
}

.options label,
.contour {
    display: flex;
    align-items: center;
    height: 28px;
    gap: 6px;
    white-space: nowrap;
}

.mark input[type="checkbox"] {
    appearance: none;
    width: 27px;
    height: 27px;
    border: 2px solid #aaa6b0;
    border-radius: 3px;
    background: #fff;
}

.mark input[type="checkbox"]:checked::before {
    content: "";
    display: block;
    width: 8px;
    height: 14px;
    margin: 1px 0 0 8px;
    border: solid #777;
    border-width: 0 2px 2px 0;
    transform: rotate(40deg);
}

.counters {
    display: grid;
    grid-template-columns: 53px 124px 56px 148px 45px;
    grid-template-rows: 40px 40px 28px;
    gap: 8px 10px;
    align-items: center;
    padding-top: 3px;
    text-align: right;
}

.counters .mid {
    text-align: center;
}

.counters input[type="text"],
.fixture input,
.distance input,
.focus-value {
    width: 100%;
    height: 40px;
    padding: 0 7px 0 10px;
    border: 1px solid #d5d0da;
}

.counters #rtime,
.counters [aria-label="Total time"] {
    font-size: 22px;
}

.counters .contour {
    grid-column: 4 / 6;
}

.actions {
    display: flex;
    gap: 12px;
    margin-left: 21px;
}

.actions button {
    display: flex;
    flex-direction: column;
    align-items: center;
    gap: 9px;
    width: 138px;
    height: 120px;
    padding-top: 5px;
    border: 1px solid #f5f3f7;
    font-size: 26px;
    font-weight: 600;
    color: #222;
    line-height: 30px;
}

.actions svg {
    width: 64px;
    height: 64px;
}

.mark-bottom {
    display: flex;
    align-items: flex-start;
    height: 139px;
    margin-right: 75px;
    background: linear-gradient(#dedbe0, #dedbe0) 28px 0 / 100% 1px no-repeat;
}

.mark-bottom button {
    border: 1px solid #e2dde5;
    font-size: 21px;
}

.fixture {
    display: grid;
    grid-template-columns: 150px 180px;
    grid-auto-rows: 42px;
    gap: 6px 8px;
    padding: 57px 0 0 2px;
}

.fixture input {
    height: 42px;
    padding-left: 0;
    border-right: none;
    border-bottom-color: transparent;
}

.pad {
    display: grid;
    grid-template-columns: 66px 66px;
    grid-template-rows: 30px 66px;
    gap: 38px 77px;
    padding: 7px 0 0 11px;
}

.pad p {
    grid-column: 1 / 3;
    display: flex;
    gap: 40px;
    padding-left: 9px;
    font-size: 21px;
    white-space: nowrap;
}

.mark-bottom svg {
    width: 48px;
    height: 50px;
    margin: auto;
}

.jog {
    display: grid;
    grid-template-columns: 67px 67px;
    grid-auto-rows: 61px;
    gap: 8px 5px;
    padding: 39px 0 0 6px;
}

.distance {
    width: 108px;
    padding: 42px 0 0 6px;
}

.distance label {
    display: block;
    padding-bottom: 8px;
    font-size: 21px;
}

.home {
    width: 149px;
    height: 40px;
    margin: 78px 0 0 7px;
}

.focus {
    display: flex;
    flex-direction: column;
    width: 162px;
    margin: 7px 0 0 12px;
}

.focus button {
    height: 40px;
}

.focus .grid-button {
    width: 66px;
    height: 63px;
    margin-bottom: 8px;
}

.mark-bottom .focus-value {
    width: 147px;
    margin: 78px 0 0 12px;
    padding: 0;
    border-right: none;
    border-bottom: none;
    font-size: 21px;
}

/* laser monitor */
.monitor .panel-head {
    padding: 0 4px 0 14px;
}

.spi {
    padding-left: 29px;
}

.alarm {
    display: flex;
    align-items: center;
    gap: 18px;
    height: 52px;
    padding-left: 35px;
}

.lamp {
    width: 28px;
    height: 28px;
    border-radius: 50%;
    background: radial-gradient(circle at 35% 30%, #fbb, #e33 45%, #722);
}

.io {
    width: 135px;
    height: 34px;
    margin-left: 81px;
    border: 1px solid #f3f1f5;
}

/* pen box */
.right-dock {
    display: flex;
    flex-direction: column;
    margin-left: 10px;
    overflow: hidden;
    background: linear-gradient(transparent 80%, #e2e0e5 92%) 0 0 / 4px 100% no-repeat;
}

.right-dock .panel-head {
    padding-left: 7px;
}

.pens {
    width: 381px;
    height: 369px;
    margin: 8px 0 0 5px;
    border-spacing: 4px;
    table-layout: fixed;
    font-size: 22px;
    color: #b4afba;
}

.pens th {
    height: 45px;
    padding: 0 13px;
    font-weight: normal;
    text-align: left;
    color: #c6c1ca;
}

.pens th:first-child {
    width: 80px;
}

.pens th:nth-child(2) {
    width: 162px;
}

.pens td {
    padding: 0 6px;
}

.pens td svg {
    float: left;
    width: 30px;
    height: 30px;
    margin: 0 9px 0 -3px;
}

.pens td:nth-child(3) {
    border: 1px solid rgba(60, 0, 60, 0.5);
    border-radius: 3px;
}

.pens .selected td {
    background: #00b2ff;
    border: 1px solid #3fe0ff;
    padding: 0 5px;
    color: #e6fbff;
    font-weight: 600;
}

.pens .selected td.black,
.black {
    background: #04030a;
}

.blue { background: #0018ff; }
.red { background: #ff2e00; }
.green { background: #00ff00; }
.magenta { background: #ff40ff; }
.yellow { background: #ffff00; }
.pink { background: #ffdcd2; }
.darkred { background: #df1a0a; }

.expander {
    width: 54px;
    height: 20px;
    margin: 11px 0 14px 293px;
}

.swatches {
    display: flex;
    gap: 13px;
    padding-left: 10px;
}

.swatches button {
    width: 39px;
    height: 43px;
}

.params {
    flex: 1;
    display: grid;
    grid-auto-rows: 1fr;
    align-items: center;
    margin: 15px 0 34px 62px;
    font-size: 23px;
}

.params > div {
    display: flex;
    height: 28px;
    white-space: nowrap;
}

.params dt {
    flex: 0 0 405px;
}

.params .clear { color: #8c8792; }
.params .pale { color: #d3d0d7; }
.params .faint { color: #ebe9ed; }

.params .group::before {
    content: "-";
    width: 33px;
    margin-left: -33px;
    color: #ccc;
}

.hint {
    height: 123px;
    margin-left: 14px;
    padding: 7px 0 0 8px;
    border: 1px solid #f0eef2;
    font-size: 23px;
    line-height: 32px;
    white-space: nowrap;
}

.hint h3 {
    font-size: 22px;
    font-weight: 600;
    color: #333;
}

.pen-buttons {
    display: flex;
    gap: 8px;
    height: 57px;
    margin-top: 16px;
    padding-left: 8px;
    border-bottom: 3px solid #b5b2b8;
}

.pen-buttons button {
    width: 197px;
    padding-bottom: 6px;
    border: 1px solid #ece8f0;
    border-bottom: none;
    font-size: 22px;
}

.statusbar {
    display: flex;
    align-items: center;
    height: 37px;
    padding: 8px 0 0 8px;
    font-size: 22px;
    color: #b4b0b6;
}

.statusbar span:first-child {
    flex: 1;
    color: #555;
}

.statusbar span:nth-child(2) {
    width: 314px;
}

.statusbar span:nth-child(3),
.statusbar span:nth-child(4) {
    width: 216px;
}

.statusbar span:last-child {
    width: 272px;
}
```
